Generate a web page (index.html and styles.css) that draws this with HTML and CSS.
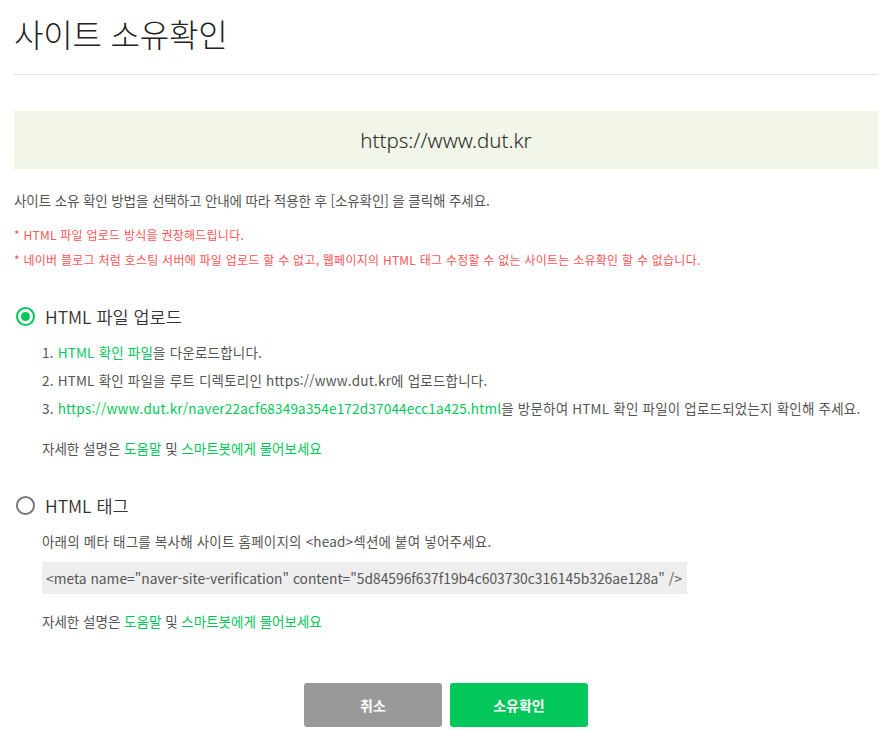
FILE: index.html
```html
<!DOCTYPE html>
<html lang="ko">
<head>
<meta charset="utf-8">
<link rel="stylesheet" href="styles.css">
</head>
<body>
<div class="page">
  <h1 class="title">사이트 소유확인</h1>
  <div class="site-box">https://www.dut.kr</div>
  <p class="desc">사이트 소유 확인 방법을 선택하고 안내에 따라 적용한 후 [소유확인] 을 클릭해 주세요.</p>
  <p class="warn">* HTML 파일 업로드 방식을 권장해드립니다.</p>
  <p class="warn warn2">* 네이버 블로그 처럼 호스팅 서버에 파일 업로드 할 수 없고, 웹페이지의 HTML 태그 수정할 수 없는 사이트는 소유확인 할 수 없습니다.</p>

  <div class="option">
    <div class="option-head">
      <span class="radio checked"></span>
      <span class="option-label">HTML 파일 업로드</span>
    </div>
    <div class="option-body">
      <p class="step">1. <span class="green">HTML 확인 파일</span>을 다운로드합니다.</p>
      <p class="step">2. HTML 확인 파일을 루트 디렉토리인 https://www.dut.kr에 업로드합니다.</p>
      <p class="step">3. <span class="green">https://www.dut.kr/naver22acf68349a354e172d37044ecc1a425.html</span>을 방문하여 HTML 확인 파일이 업로드되었는지 확인해 주세요.</p>
      <p class="help">자세한 설명은 <span class="green">도움말</span> 및 <span class="green">스마트봇에게 물어보세요</span></p>
    </div>
  </div>

  <div class="option option2">
    <div class="option-head">
      <span class="radio"></span>
      <span class="option-label">HTML 태그</span>
    </div>
    <div class="option-body">
      <p class="step">아래의 메타 태그를 복사해 사이트 홈페이지의 &lt;head&gt;섹션에 붙여 넣어주세요.</p>
      <div class="code">&lt;meta name="naver-site-verification" content="5d84596f637f19b4c603730c316145b326ae128a" /&gt;</div>
      <p class="help">자세한 설명은 <span class="green">도움말</span> 및 <span class="green">스마트봇에게 물어보세요</span></p>
    </div>
  </div>

  <div class="buttons">
    <button class="btn btn-cancel">취소</button>
    <button class="btn btn-ok">소유확인</button>
  </div>
</div>
</body>
</html>
```
FILE: styles.css
```css
html, body {
  margin: 0;
  padding: 0;
  background: #fff;
}
body {
  font-family: "Noto Sans CJK KR", "Noto Sans", sans-serif;
  color: #555;
}
.page {
  width: 864px;
  padding: 0 12px 0 14px;
}
p { margin: 0; }
.title {
  margin: 0;
  padding-top: 9px;
  height: 75px;
  box-sizing: border-box;
  font-size: 32px;
  font-weight: 300;
  line-height: 48px;
  color: #222;
  border-bottom: 1px solid #e0e0e0;
  letter-spacing: -0.2px;
}
.site-box {
  margin-top: 36px;
  height: 58px;
  background: #f1f6e9;
  display: flex;
  align-items: center;
  justify-content: center;
  font-family: "Noto Sans", sans-serif;
  font-size: 20.5px;
  font-weight: 300;
  color: #2a2a2a;
}
.desc {
  margin-top: 21px;
  font-size: 13.5px;
  line-height: 20px;
  color: #555;
  letter-spacing: -0.1px;
}
.warn {
  margin-top: 16px;
  font-size: 12px;
  line-height: 18px;
  color: #ff5555;
  letter-spacing: 0.25px;
}
.warn2 { margin-top: 7px; }
.option { margin-top: 34px; }
.option2 { margin-top: 34px; }
.option-head {
  display: flex;
  align-items: center;
  height: 26px;
}
.radio {
  width: 15px;
  height: 15px;
  border: 2px solid #777;
  border-radius: 50%;
  margin-left: 2px;
  margin-right: 10px;
  box-sizing: content-box;
  position: relative;
  flex: none;
}
.radio.checked {
  border-color: #03c75a;
}
.radio.checked::after {
  content: "";
  position: absolute;
  left: 3px;
  top: 3px;
  width: 9px;
  height: 9px;
  border-radius: 50%;
  background: #03c75a;
}
.option-label {
  font-size: 17.5px;
  font-weight: 350;
  color: #333;
}
.option-body {
  padding-left: 28px;
  padding-top: 9px;
}
.step {
  font-size: 13.5px;
  line-height: 28px;
  color: #555;
  letter-spacing: 0.2px;
}
.green { color: #03c75a; }
.help {
  margin-top: 16px;
  font-size: 13.5px;
  line-height: 20px;
  color: #555;
}
.code {
  margin-top: 7px;
  display: inline-block;
  background: #eeeeee;
  padding: 0 5px 0 4px;
  height: 32px;
  line-height: 32px;
  font-size: 13.8px;
  color: #555;
}
.option2 .help { margin-top: 17px; }
.buttons {
  display: flex;
  justify-content: center;
  gap: 8px;
  margin-top: 52px;
}
.btn {
  width: 138px;
  height: 44px;
  border: none;
  border-radius: 3px;
  color: #fff;
  font-family: "Noto Sans CJK KR", sans-serif;
  font-size: 14px;
  font-weight: 700;
  cursor: pointer;
}
.btn-cancel { background: #999; }
.btn-ok { background: #03c75a; }
```
